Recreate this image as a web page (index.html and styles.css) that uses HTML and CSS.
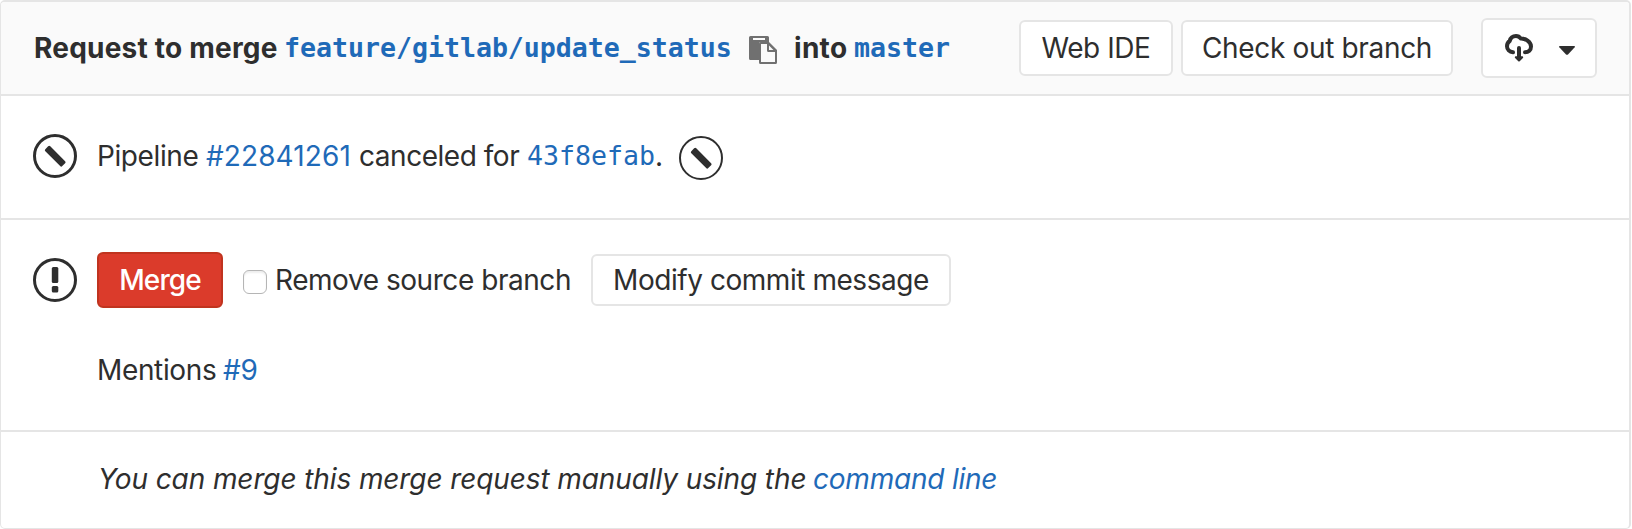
FILE: index.html
```html
<!DOCTYPE html>
<html lang="en">
<head>
<meta charset="utf-8">
<title>Merge request</title>
<link rel="stylesheet" href="styles.css">
</head>
<body>
<main class="widget">
  <header class="row head">
    <div class="title"><span class="t-request">Request to merge</span><a class="ref ref-source">feature/gitlab/update_status</a>
      <svg class="copy" viewBox="0 0 28 28" width="28" height="28"><path fill="#707070" fill-rule="evenodd" d="M1.500 0h17a1.500 1.500 0 0 1 1.500 1.500V6h-8.500a1.500 1.500 0 0 0-1.500 1.500V24H1.500A1.500 1.500 0 0 1 0 22.500v-21A1.500 1.500 0 0 1 1.500 0zM4 2v2h12V2z"/><path fill="#707070" fill-rule="evenodd" d="M11.500 6H20l8 8v12.500a1.500 1.500 0 0 1-1.500 1.500h-15a1.500 1.500 0 0 1-1.500-1.500v-19a1.500 1.500 0 0 1 1.500-1.500zM12 8v18h14V16h-6.500a1.500 1.500 0 0 1-1.500-1.500V8zM20 9.500V14h4.500z"/></svg>
      <span class="t-into">into</span><a class="ref ref-target">master</a></div>
    <div class="actions">
      <button class="btn ide"><span class="t-ide">Web IDE</span></button>
      <button class="btn checkout"><span class="t-checkout">Check out branch</span></button>
      <button class="btn download" aria-label="Download">
        <svg width="28" height="28" viewBox="0 0 28 28" fill="none" stroke="#2e2e2e" stroke-width="4" stroke-linecap="round" stroke-linejoin="round"><path d="M8 18.300C4.500 18 2 15.500 2 12.300c0-2.500 1.200-4.300 2.700-5.300C5.500 3.800 8 2 11 2c2.200 0 3.700 1 4.700 2.500 4.500-.2 10.300 3.200 10.300 8 0 3.500-2.500 5.800-6 5.800"/><path d="M14 14v9"/><path d="M10.800 23.300h6.400L14 26.500z" fill="#2e2e2e" stroke-width="2"/></svg>
        <svg class="caret" width="16" height="9" viewBox="0 0 16 9"><path fill="#2e2e2e" d="M.7 0h14.600q1 .4.400 1.300L9 8.400q-1 .8-2 0L.3 1.300Q-.3.4.700 0z"/></svg>
      </button>
    </div>
  </header>
  <section class="row pipeline">
    <svg class="status" width="44" height="44" viewBox="0 0 44 44"><circle cx="22" cy="22" r="20.500" fill="none" stroke="#2e2e2e" stroke-width="3"/><rect x="10.300" y="18.500" width="24" height="7" rx="1.500" transform="rotate(45 22 22)" fill="#2e2e2e"/></svg>
    <p class="line"><span class="t-pipeline">Pipeline</span><a class="t-number">#22841261</a><span class="t-canceled">canceled for</span><a class="sha">43f8efab</a><span class="dot">.</span></p>
    <svg class="stage" width="44" height="44" viewBox="0 0 44 44"><circle cx="22" cy="22" r="21" fill="none" stroke="#2e2e2e" stroke-width="2"/><rect x="10.300" y="18.500" width="24" height="7" rx="1.500" transform="rotate(45 22 22)" fill="#2e2e2e"/></svg>
  </section>
  <section class="row merge">
    <div class="controls">
      <svg class="status" width="44" height="44" viewBox="0 0 44 44"><circle cx="22" cy="22" r="20.500" fill="none" stroke="#2e2e2e" stroke-width="3"/><rect x="18.800" y="9" width="6.500" height="16" rx="1.500" fill="#2e2e2e"/><rect x="18.800" y="28" width="6.500" height="6.500" rx="1.500" fill="#2e2e2e"/></svg>
      <button class="btn danger"><span class="t-merge">Merge</span></button>
      <label class="check"><input type="checkbox"><span class="t-remove">Remove source branch</span></label>
      <button class="btn modify"><span class="t-modify">Modify commit message</span></button>
    </div>
    <p class="line mentions"><span class="t-mentions">Mentions</span><a class="t-issue">#9</a></p>
  </section>
  <footer class="row foot"><p class="line"><span class="t-manual">You can merge this merge request manually using the</span><a class="t-cli">command line</a></p></footer>
</main>
</body>
</html>
```
FILE: styles.css
```css
* { box-sizing: border-box; }
body { margin: 0; background: #fff; color: #2e2e2e; font: 28px/40px Inter, "Liberation Sans", sans-serif; letter-spacing: -0.6px; }
.widget { width: 1631px; height: 529px; border: solid #e5e5e5; border-width: 2px 2px 1px 1px; border-radius: 5px; overflow: hidden; display: flex; flex-direction: column; }
.row { display: flex; align-items: center; padding-left: 32px; border-bottom: 2px solid #e5e5e5; flex: none; }
a { color: #1f6ab8; }
span, a { white-space: nowrap; }
.line { margin: 0; display: flex; align-items: center; }
.head { height: 94px; background: #fafafa; justify-content: space-between; padding-right: 32px; }
.title { display: flex; align-items: center; font-weight: 700; padding-left: 1px; }
.ref, .sha { font-family: "DejaVu Sans Mono", monospace; font-size: 26.6px; letter-spacing: 0; }
.t-request { width: 250px; letter-spacing: 0.22px; }
.ref-source { width: 465px; letter-spacing: -0.02px; }
.copy { margin-top: 4px; }
.t-into { margin-left: 17px; width: 60px; letter-spacing: 0.3px; }
.actions { display: flex; align-items: center; }
.btn { height: 56px; padding: 0; border: 2px solid #e5e5e5; border-radius: 6px; background: #fff; color: #2e2e2e; font: inherit; letter-spacing: inherit; display: flex; align-items: center; justify-content: center; }
.ide { width: 154px; margin-right: 8px; letter-spacing: -0.45px; }
.checkout { width: 272px; margin-right: 28px; letter-spacing: -0.33px; }
.download { width: 116px; height: 60px; gap: 26px; padding-left: 1px; }
.caret { margin-top: 4px; }
.pipeline { height: 124px; }
.status { margin-right: 20px; flex: none; }
.pipeline .status { margin-bottom: 3px; }
.pipeline .line { width: 582px; margin-bottom: 2px; }
.stage { margin-top: 1px; }
.t-pipeline { width: 109px; letter-spacing: -0.4px; }
.t-number { width: 153px; letter-spacing: 0.1px; }
.t-canceled { width: 168px; letter-spacing: -0.47px; }
.merge { height: 212px; flex-direction: column; align-items: flex-start; padding-top: 32px; }
.controls { display: flex; align-items: center; height: 56px; }
.danger { width: 126px; border-color: #c0341f; background: #db3b2b; color: #fff; font-weight: 500; letter-spacing: -0.9px; margin-right: 20px; }
.check { display: flex; align-items: center; width: 348px; letter-spacing: -0.45px; }
.check input { appearance: none; width: 24px; height: 24px; margin: 3px 8px 0 0; border: 1.5px solid #b5b5b5; border-radius: 6px; background: #fff; box-shadow: inset 0 2px 2px #eee; }
.modify { width: 360px; height: 52px; letter-spacing: -0.45px; }
.mentions { margin: 42px 0 0 64px; }
.t-mentions { width: 126px; letter-spacing: -0.35px; }
.t-issue { letter-spacing: -0.2px; }
.foot { height: 94px; border-bottom: 0; padding-left: 97px; font-style: italic; }
.t-manual { width: 715px; letter-spacing: -0.1px; }
.t-cli { letter-spacing: -0.22px; }
```
